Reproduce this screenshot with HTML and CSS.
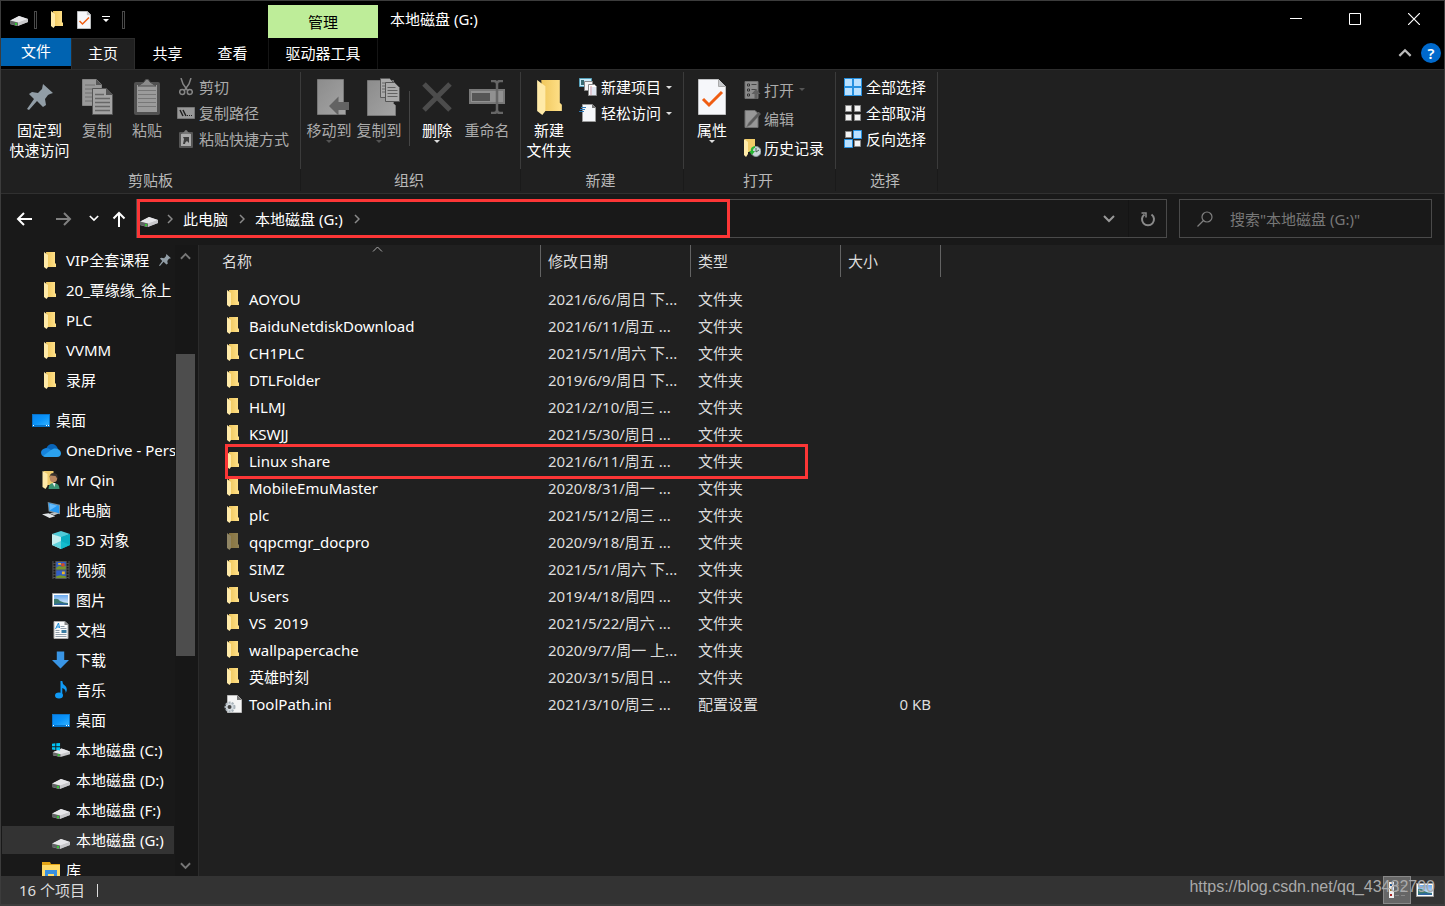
FILE: index.html
```html
<!DOCTYPE html>
<html lang="zh-CN">
<head>
<meta charset="utf-8">
<title>本地磁盘 (G:)</title>
<link rel="stylesheet" href="styles.css">
</head>
<body>
<svg class="defs" aria-hidden="true">
  <defs>
    <linearGradient id="g-folder" x1="0" x2="1"><stop offset="0" stop-color="#f0c75c"/><stop offset="1" stop-color="#ffe18a"/></linearGradient>
    <linearGradient id="g-grey" x1="0" y1="0" x2="1" y2="1"><stop offset="0" stop-color="#8c8c8c"/><stop offset="1" stop-color="#a4a4a4"/></linearGradient>
    <linearGradient id="g-desk" x1="0" y1="0" x2="1" y2="1"><stop offset="0" stop-color="#0a84ee"/><stop offset="0.5" stop-color="#0a94fa"/><stop offset="1" stop-color="#33b1ff"/></linearGradient>
    <linearGradient id="g-sky" x1="0" y1="0" x2="0" y2="1"><stop offset="0" stop-color="#6aa9ee"/><stop offset="1" stop-color="#e8f5ff"/></linearGradient>
  </defs>
  <symbol id="folder" viewBox="0 0 12 17"><path d="M2 0h9v11l1 1v3H3z" fill="url(#g-folder)"/><path d="M0 0l4 3v12l-1.500 2L0 15z" fill="#ffeaa8"/></symbol>
  <symbol id="drive" viewBox="0 0 18 12"><path d="M0 7L9 2l9 3v3L7 12l-7-2z" fill="#b9b9bc"/><path d="M0 6.500L9 2l9 3-10 4z" fill="#e6e6e9"/><path d="M0 6.500l8 2V12l-8-2z" fill="#5f6263"/><path d="M8 8.500L18 5v3L8 12z" fill="#c7c7ca"/><circle cx="6" cy="10" r="1.200" fill="#36c636"/></symbol>
  <symbol id="check-doc" viewBox="0 0 28 36"><path d="M.5.5h20l7 7v28H.5z" fill="#f6f7fa" stroke="#bfc0c2"/><path d="M20.500.500v7h7" fill="#c7c9cc" stroke="#aaa"/><path d="M5 20l6 6L24 13" fill="none" stroke="#ef5d12" stroke-width="3"/></symbol>
  <symbol id="pin" viewBox="0 0 26 26"><path d="M16 0l10 9-3 1-2 1-3 4 1 6-3 2-6-6-8 9-2-1 7-10-5-5 3-2 6 1 4-4z" fill="#919da6"/></symbol>
  <symbol id="pages" viewBox="0 0 31 36"><path d="M.5.5h14l5 5v21H.5z" fill="#999" stroke="#858585"/><path d="M14 0v6h6z" fill="#555"/><path d="M3 6h10M3 10h10M3 14h10M3 18h10M3 22h10" stroke="#707070"/><path d="M10.500 9.500h14l6 6v20h-20z" fill="#a3a3a3" stroke="#555"/><path d="M24 9v7h7z" fill="#555"/><path d="M13 15.500h9M13 19.500h15M13 23.500h15M13 27.500h15M13 31.500h15" stroke="#676767" stroke-width="1.500"/></symbol>
  <symbol id="paste" viewBox="0 0 26 36"><rect y="3" width="26" height="33" rx="2" fill="#515151"/><path d="M3 6h20v27H3z" fill="#9b9b9b"/><path d="M4 7L10 3q3-6 6 0l6 4z" fill="#8b8b8b" stroke="#4e4e4e"/><path d="M4 11.500h18M4 15.500h18M4 19.500h18M4 23.500h18M4 27.500h18" stroke="#777"/></symbol>
  <symbol id="scissors" viewBox="0 0 14 18"><g fill="none" stroke="#858585" stroke-width="1.500"><path d="M2 0l2 6 5 7M12 0l-2 6-5 7"/><circle cx="3.200" cy="14" r="2.500"/><circle cx="10.800" cy="14" r="2.500"/></g></symbol>
  <symbol id="path" viewBox="0 0 18 12"><path d="M.5.5h17v11H.5z" fill="#989898" stroke="#777"/><path d="M3 3l3 6M6 3l3 6" stroke="#222" stroke-width="1.500"/><path d="M10 8.500h1m1 0h1m1 0h1" stroke="#222"/></symbol>
  <symbol id="shortcut" viewBox="0 0 14 18"><rect y="2" width="14" height="16" rx="1" fill="#555"/><path d="M2 4h10v12H2z" fill="#aaa"/><path d="M2 4l3-2q2-4 4 0l3 2z" fill="#777"/><path d="M4 14l1-5-1-2h6v6L8 11q-2 1-2 3z" fill="#3d3d3d"/></symbol>
  <symbol id="move-to" viewBox="0 0 32 36"><path d="M.5.5h26v24l2 2v9H.5z" fill="url(#g-grey)" stroke="#777"/><path d="M12 27L21.500 17.500V23H32v8H21.500v5.500z" fill="#636363"/></symbol>
  <symbol id="copy-to" viewBox="0 0 33 38"><path d="M.5 2.500h26v23l2 2v10H.5z" fill="url(#g-grey)" stroke="#777"/><path d="M13.500.500h9l4 4v15h-13z" fill="#aaa" stroke="#5c5c5c"/><path d="M15 5h7M15 8h7M15 11h7M15 14h7" stroke="#666"/><path d="M18.500 4.500h9l5 5v14h-14z" fill="#aaa" stroke="#555"/><path d="M20.500 9.500h8M20.500 12.500h10M20.500 15.500h10M20.500 18.500h10" stroke="#626262"/></symbol>
  <symbol id="delete" viewBox="0 0 30 30"><path d="M2 2l26 26M28 2L2 28" stroke="#4c4c4c" stroke-width="5"/></symbol>
  <symbol id="rename" viewBox="0 0 36 34"><path d="M1 10h34v13H1z" fill="#919191" stroke="#787878" stroke-width="2"/><path d="M3 13h18v8H3z" fill="#565656"/><path d="M22 1h3q3 0 3 3v26q0 3-3 3h-3M34 1h-3q-3 0-3 3v26q0 3 3 3h3" fill="none" stroke="#666" stroke-width="2.500"/></symbol>
  <symbol id="new-items" viewBox="0 0 18 18"><path d="M.5.5h12v8H.5z" fill="#c8ecfa" stroke="#57a2bc"/><path d="M2 2h3v5H2z" fill="#386d74"/><path d="M5.500 3.500h8v9h-8z" fill="#f4f4f4" stroke="#888"/><path d="M9.500 6.500h6l2 2v9h-8z" fill="#fff" stroke="#888"/><path d="M12 8v9" stroke="#f49a9a"/><path d="M11 10h6M11 12h6M11 14h6M11 16h6" stroke="#a9b9d8" stroke-width=".7"/></symbol>
  <symbol id="easy" viewBox="0 0 18 18"><path d="M3.500.500h10l3 3v14h-13z" fill="#f5f7fa" stroke="#999"/><path d="M13 0v4h4z" fill="#777"/><path d="M2 3.500h5M1 5.500h5M0 7.500h5" stroke="#2c77b5"/></symbol>
  <symbol id="open" viewBox="0 0 16 18"><path d="M.5.5h13v17H.5z" fill="#8d8d8d" stroke="#707070"/><path d="M3 3h2v2H3zM3 8h2v2H3zM3 13h2v2H3z" fill="#aaa" stroke="#333"/><path d="M7 3.500h5M7 8.500h5" stroke="#444"/><path d="M7 13l4.500-5 4.500 5h-3v5H10v-5z" fill="#606060"/></symbol>
  <symbol id="edit" viewBox="0 0 16 18"><path d="M.5.5h10l3 3v14H.5z" fill="#989898" stroke="#707070"/><path d="M14 2l2 2-10 11-4 2 2-4z" fill="#5b5b5b" stroke="#777" stroke-width=".5"/></symbol>
  <symbol id="history" viewBox="0 0 17 18"><path d="M1 0h10v13H1z" fill="#f1cc68"/><path d="M0 0l4 3v12l-2 3-2-2z" fill="#ffeba9"/><circle cx="12" cy="12.500" r="5" fill="#c9d5d9" stroke="#8b9799"/><path d="M12 9v4l3-2" fill="none" stroke="#465"/><path d="M11 7Q6 8 7 12H5l3 4 3-4H9q0-3 2-3z" fill="#26b632"/></symbol>
  <symbol id="sel-all" viewBox="0 0 18 18"><path d="M0 0h18v18H0z" fill="#2690df"/><path d="M1 1h7v7H1zM10 1h7v7h-7zM1 10h7v7H1zM10 10h7v7h-7z" fill="#b9e0ff"/></symbol>
  <symbol id="sel-none" viewBox="0 0 18 18"><path d="M1.500 1.500h6v6h-6zM10.500 1.500h6v6h-6zM1.500 10.500h6v6h-6zM10.500 10.500h6v6h-6z" fill="#f4f4f4" stroke="#8a8a8a"/></symbol>
  <symbol id="sel-inv" viewBox="0 0 18 18"><path d="M1.500 1.500h6v6h-6zM10.500 10.500h6v6h-6z" fill="#f4f4f4" stroke="#8a8a8a"/><path d="M9.500.500h8v8h-8zM.5 9.500h8v8h-8z" fill="#b9e0ff" stroke="#2690df"/></symbol>
  <symbol id="desktop" viewBox="0 0 18 13"><path d="M0 0h18v13H0z" fill="#0873c8"/><path d="M1 1h16v10H1z" fill="url(#g-desk)"/><path d="M1 11.500h1M14 11.500h1M16 11.500h1" stroke="#fff"/></symbol>
  <symbol id="cloud" viewBox="0 0 20 13"><path d="M5 5Q7 0 11 0q4 0 6 5l-7 4z" fill="#0864b8"/><path d="M4 13Q0 12 0 8.500T5 4q3 0 5 2l8 6z" fill="#1683dc"/><path d="M10 6l3-1.500Q19 4 20 9q0 4-4 4H4l-2-1z" fill="#2ba1ee"/></symbol>
  <symbol id="user" viewBox="0 0 17 18"><path d="M1 0h10v14H1z" fill="#efcb6c"/><path d="M0 0l5 3v12l-2 3-3-2z" fill="#ffeaa9"/><path d="M6 18q0-6 5-6 6 0 6 6z" fill="#3d9475"/><circle cx="11" cy="7.500" r="3.700" fill="#b98761"/><path d="M7 7q0-5 4-5 5 0 4 6l-2-3-5-.5z" fill="#39322f"/><path d="M10 12h3l-1 4z" fill="#eee"/></symbol>
  <symbol id="pc" viewBox="0 0 19 17"><path d="M6 0l13 3v10L7 10z" fill="#7a8e9b"/><path d="M7 1l11 3v8L8 9z" fill="#2499f4"/><path d="M8 2l8 2-8 5z" fill="#65bdff"/><path d="M8 12l5-1 5 1-5 2z" fill="#b8c0c5"/><path d="M0 13l7-1 7 3-6 2z" fill="#e0e4e6"/></symbol>
  <symbol id="cube" viewBox="0 0 18 18"><path d="M0 3l9-3 9 3-9 4z" fill="#4fcbd8"/><path d="M0 3l9 3v12l-9-4z" fill="#c4eeef"/><path d="M18 3L9 6v12l9-4z" fill="#0aaec1"/><path d="M0 14l9-4v8z" fill="#5fd3dc"/><path d="M18 14l-9-4v8z" fill="#14bccd"/></symbol>
  <symbol id="film" viewBox="0 0 18 19"><path d="M0 0h18v19H0z" fill="#555"/><path d="M2 0v19M16 0v19" stroke="#191919" stroke-width="2" stroke-dasharray="2 1"/><path d="M4 1h10v8H4zM4 10h10v8H4z" fill="#315fc7"/><path d="M4 7l3-2 3 1 4-1v4H4zM4 16l4-1 6 1v2H4z" fill="#77962b"/><path d="M6 2h3v2H6zM10 11h3v3h-3z" fill="#efb829"/><circle cx="11" cy="4" r="2" fill="#cf4c27"/></symbol>
  <symbol id="picture" viewBox="0 0 18 14"><path d="M.5.5h17v13H.5z" fill="#fff" stroke="#9e9e9e"/><path d="M2 2h14v10H2z" fill="url(#g-sky)"/><path d="M2 6q4-1 6 2 4 2 8 2v2H2z" fill="#3d7b70"/><path d="M2 11l7-1 7 1v1H2z" fill="#2f67a3"/></symbol>
  <symbol id="document" viewBox="0 0 15 18"><path d="M.5.5h11l3 3v14H.5z" fill="#fafafa" stroke="#aaa"/><path d="M11 0v4h4z" fill="#888"/><path d="M2 8l3-6 1 5M3 6h3" stroke="#168bdb" fill="none"/><path d="M7 5.500h4M7 7.500h6M2 9.500h4M2 11.500h4M2 13.500h11M2 15.500h11" stroke="#919eaa"/><path d="M8 9h5v3H8z" fill="#397ca3"/></symbol>
  <symbol id="download" viewBox="0 0 16 16"><path d="M4.500 0h7v8H16l-8 8-8-8h4.500z" fill="#3995e5"/></symbol>
  <symbol id="music" viewBox="0 0 12 18"><ellipse cx="4" cy="14.500" rx="4" ry="3" fill="#109af5"/><path d="M5.500 0h1.800q0 3 2.500 4.500 3.500 3 1 7.500 0-4-3.500-5v8H5.500z" fill="#109af5"/></symbol>
  <symbol id="winlogo" viewBox="0 0 19 15"><path d="M1 10l9-4 9 3v3l-10 3-8-2z" fill="#c7c7ca"/><path d="M1 10l9-4 9 3-10 3z" fill="#e6e6e9"/><path d="M1 10l8 2v3l-8-2z" fill="#656868"/><path d="M0 1l3.500-.5v3H0zM4.500.500L8.500 0v3.500h-4zM0 4.500h3.500v3L0 7zM4.500 4.500h4V8l-4-.5z" fill="#00c2f3"/><circle cx="7" cy="13" r="1.200" fill="#36c636"/></symbol>
  <symbol id="library" viewBox="0 0 18 16"><path d="M0 0h8l1 2h9v14H0z" fill="#e5a515"/><path d="M0 3h18v13H0z" fill="#ffdb69"/><path d="M3 16V8h12v8h-3v-4H6v4z" fill="#3990df"/></symbol>
  <symbol id="ini" viewBox="0 0 18 18"><path d="M3.500.500h10l4 4v13h-14z" fill="#f5f5f5" stroke="#bbb"/><path d="M13 0v5h5z" fill="#777"/><circle cx="6" cy="12" r="4.500" fill="#d5dbe0" stroke="#aab4bb" stroke-width="2" stroke-dasharray="2 1.200"/><circle cx="5.500" cy="12" r="2" fill="#414141"/></symbol>
  <symbol id="chev-r" viewBox="0 0 6 10"><path d="M1 1l4 4-4 4" fill="none" stroke="currentColor" stroke-width="1.500"/></symbol>
  <symbol id="chev-d" viewBox="0 0 12 8"><path d="M1 1l5 5 5-5" fill="none" stroke="currentColor" stroke-width="2"/></symbol>
  <symbol id="chev-u" viewBox="0 0 12 8"><path d="M1 7l5-5 5 5" fill="none" stroke="currentColor" stroke-width="2"/></symbol>
  <symbol id="chev-thin" viewBox="0 0 11 6"><path d="M1 5.500l4.500-4.500L10 5.500" fill="none" stroke="currentColor"/></symbol>
  <symbol id="arrow" viewBox="0 0 16 14"><path d="M15.500 7H1.500M7.500 1l-6 6 6 6" fill="none" stroke="currentColor" stroke-width="2"/></symbol>
  <symbol id="caret" viewBox="0 0 6 3"><path d="M0 0h6L3 3z" fill="currentColor"/></symbol>
</svg>

<div class="window">
  <header class="topbar">
    <div class="titlebar">
      <div class="quick">
        <svg class="i-drive"><use href="#drive"/></svg><span class="grip"></span>
        <button class="plain" aria-label="新建文件夹"><svg class="i-folder"><use href="#folder"/></svg></button>
        <button class="plain" aria-label="属性"><svg class="i-check"><use href="#check-doc"/></svg></button>
        <button class="plain" aria-label="自定义快速访问工具栏"><svg class="i-custom" viewBox="0 0 8 7"><path d="M0 0h8v1H0zM1 3h6L4 6z" fill="#fff"/></svg></button>
        <span class="grip"></span>
      </div>
      <div class="context">管理</div>
      <h1 class="title">本地磁盘 (G:)</h1>
      <div class="controls">
        <button class="plain" aria-label="最小化"><svg class="i-win" viewBox="0 0 12 12"><path d="M0 5.500h12" stroke="#fff"/></svg></button>
        <button class="plain" aria-label="最大化"><svg class="i-win" viewBox="0 0 12 12"><path d="M.5.5h11v11H.5z" fill="none" stroke="#fff"/></svg></button>
        <button class="plain" aria-label="关闭"><svg class="i-win" viewBox="0 0 12 12"><path d="M0 0l12 12M12 0L0 12" stroke="#fff" stroke-width="1.200"/></svg></button>
      </div>
    </div>
    <nav class="tabs">
      <button class="tab file">文件</button><button class="tab active">主页</button><button class="tab">共享</button><button class="tab">查看</button><button class="tab tools">驱动器工具</button>
      <div class="help">
        <button class="plain" aria-label="折叠功能区"><svg class="i-collapse"><use href="#chev-u"/></svg></button>
        <button class="plain help-btn" aria-label="帮助">?</button>
      </div>
    </nav>
  </header>

  <section class="ribbon">
    <div class="group clip">
      <div class="tools-row">
        <button class="big wide"><span class="pic"><svg class="i-pin"><use href="#pin"/></svg></span>固定到<br>快速访问</button>
        <button class="big off"><span class="pic"><svg class="i-pages"><use href="#pages"/></svg></span>复制</button>
        <button class="big off"><span class="pic"><svg class="i-paste"><use href="#paste"/></svg></span>粘贴</button>
        <div class="smalls">
          <button class="small off"><span class="ico"><svg class="i-s14"><use href="#scissors"/></svg></span>剪切</button>
          <button class="small off"><span class="ico"><svg class="i-path"><use href="#path"/></svg></span>复制路径</button>
          <button class="small off"><span class="ico"><svg class="i-s14"><use href="#shortcut"/></svg></span>粘贴快捷方式</button>
        </div>
      </div>
      <div class="group-name">剪贴板</div>
    </div>
    <div class="group org">
      <div class="tools-row">
        <button class="big off"><span class="pic shifted"><svg class="i-move"><use href="#move-to"/></svg></span>移动到<svg class="i-caret dim"><use href="#caret"/></svg></button>
        <button class="big off"><span class="pic shifted"><svg class="i-copyto"><use href="#copy-to"/></svg></span>复制到<svg class="i-caret dim"><use href="#caret"/></svg></button>
        <span class="split"></span>
        <button class="big"><span class="pic"><svg class="i-delete"><use href="#delete"/></svg></span>删除<svg class="i-caret"><use href="#caret"/></svg></button>
        <button class="big off"><span class="pic"><svg class="i-rename"><use href="#rename"/></svg></span>重命名</button>
      </div>
      <div class="group-name">组织</div>
    </div>
    <div class="group new">
      <div class="tools-row">
        <button class="big"><span class="pic"><svg class="i-bigfolder"><use href="#folder"/></svg></span>新建<br>文件夹</button>
        <div class="smalls">
          <button class="small"><span class="ico"><svg class="i-18"><use href="#new-items"/></svg></span>新建项目<svg class="i-caret"><use href="#caret"/></svg></button>
          <button class="small"><span class="ico"><svg class="i-18"><use href="#easy"/></svg></span>轻松访问<svg class="i-caret"><use href="#caret"/></svg></button>
        </div>
      </div>
      <div class="group-name">新建</div>
    </div>
    <div class="group opn">
      <div class="tools-row">
        <button class="big"><span class="pic"><svg class="i-props"><use href="#check-doc"/></svg></span>属性<svg class="i-caret"><use href="#caret"/></svg></button>
        <div class="smalls loose">
          <button class="small off"><span class="ico"><svg class="i-16"><use href="#open"/></svg></span>打开<svg class="i-caret dim"><use href="#caret"/></svg></button>
          <button class="small off"><span class="ico"><svg class="i-16"><use href="#edit"/></svg></span>编辑</button>
          <button class="small"><span class="ico"><svg class="i-16"><use href="#history"/></svg></span>历史记录</button>
        </div>
      </div>
      <div class="group-name">打开</div>
    </div>
    <div class="group sel">
      <div class="tools-row">
        <div class="smalls">
          <button class="small"><span class="ico"><svg class="i-18"><use href="#sel-all"/></svg></span>全部选择</button>
          <button class="small"><span class="ico"><svg class="i-18"><use href="#sel-none"/></svg></span>全部取消</button>
          <button class="small"><span class="ico"><svg class="i-18"><use href="#sel-inv"/></svg></span>反向选择</button>
        </div>
      </div>
      <div class="group-name">选择</div>
    </div>
  </section>

  <div class="navbar">
    <div class="history">
      <button class="plain" aria-label="后退"><svg class="i-arrow"><use href="#arrow"/></svg></button>
      <button class="plain forward" aria-label="前进"><svg class="i-arrow flip"><use href="#arrow"/></svg></button>
      <button class="plain recent" aria-label="最近浏览的位置"><svg class="i-recent"><use href="#chev-d"/></svg></button>
      <button class="plain up" aria-label="上移"><svg class="i-up" viewBox="0 0 14 16"><path d="M7 16V2M1.500 7.500L7 2l5.500 5.500" fill="none" stroke="currentColor" stroke-width="2"/></svg></button>
    </div>
    <div class="address">
      <svg class="i-drive"><use href="#drive"/></svg>
      <svg class="i-crumb"><use href="#chev-r"/></svg>
      <a href="#">此电脑</a>
      <svg class="i-crumb"><use href="#chev-r"/></svg>
      <a href="#">本地磁盘 (G:)</a>
      <svg class="i-crumb"><use href="#chev-r"/></svg>
      <button class="plain drop" aria-label="以前的位置"><svg class="i-drop"><use href="#chev-d"/></svg></button>
      <button class="plain refresh" aria-label="刷新"><svg class="i-refresh" viewBox="0 0 16 16"><path d="M4.500 3.500A6 6 0 1 0 11.500 3.500" fill="none" stroke="currentColor" stroke-width="2"/><path d="M1.500 2h4.500v4.500" fill="none" stroke="currentColor" stroke-width="1.500"/></svg></button>
      <span class="mark mark-address"></span>
    </div>
    <label class="search"><svg class="i-search" viewBox="0 0 16 16"><circle cx="10" cy="6" r="5" fill="none" stroke="currentColor" stroke-width="1.200"/><path d="M6.500 9.500L.5 15.500" stroke="currentColor" stroke-width="1.200"/></svg><input type="text" aria-label="搜索" placeholder='搜索"本地磁盘 (G:)"'></label>
  </div>

  <div class="body">
    <aside class="side">
      <ul class="tree">
        <li class="l1"><span class="ico"><svg class="i-folder"><use href="#folder"/></svg></span>VIP全套课程<svg class="i-pinned"><use href="#pin"/></svg></li>
        <li class="l1"><span class="ico"><svg class="i-folder"><use href="#folder"/></svg></span>20_覃缘缘_徐上</li>
        <li class="l1"><span class="ico"><svg class="i-folder"><use href="#folder"/></svg></span>PLC</li>
        <li class="l1"><span class="ico"><svg class="i-folder"><use href="#folder"/></svg></span>VVMM</li>
        <li class="l1"><span class="ico"><svg class="i-folder"><use href="#folder"/></svg></span>录屏</li>
        <li class="l0"><span class="ico"><svg class="i-desk"><use href="#desktop"/></svg></span>桌面</li>
        <li class="l1"><span class="ico"><svg class="i-cloud"><use href="#cloud"/></svg></span>OneDrive - Personal</li>
        <li class="l1"><span class="ico"><svg class="i-18"><use href="#user"/></svg></span>Mr Qin</li>
        <li class="l1"><span class="ico"><svg class="i-18"><use href="#pc"/></svg></span>此电脑</li>
        <li class="l2"><span class="ico"><svg class="i-18"><use href="#cube"/></svg></span>3D 对象</li>
        <li class="l2"><span class="ico"><svg class="i-18"><use href="#film"/></svg></span>视频</li>
        <li class="l2"><span class="ico"><svg class="i-18"><use href="#picture"/></svg></span>图片</li>
        <li class="l2"><span class="ico"><svg class="i-18"><use href="#document"/></svg></span>文档</li>
        <li class="l2"><span class="ico"><svg class="i-16"><use href="#download"/></svg></span>下载</li>
        <li class="l2"><span class="ico"><svg class="i-18"><use href="#music"/></svg></span>音乐</li>
        <li class="l2"><span class="ico"><svg class="i-desk"><use href="#desktop"/></svg></span>桌面</li>
        <li class="l2"><span class="ico"><svg class="i-18"><use href="#winlogo"/></svg></span>本地磁盘 (C:)</li>
        <li class="l2"><span class="ico low"><svg class="i-drive"><use href="#drive"/></svg></span>本地磁盘 (D:)</li>
        <li class="l2"><span class="ico low"><svg class="i-drive"><use href="#drive"/></svg></span>本地磁盘 (F:)</li>
        <li class="l2 current"><span class="ico low"><svg class="i-drive"><use href="#drive"/></svg></span>本地磁盘 (G:)</li>
        <li class="l1"><span class="ico"><svg class="i-18"><use href="#library"/></svg></span>库</li>
      </ul>
      <div class="scroll">
        <svg class="i-scroll"><use href="#chev-u"/></svg>
        <div class="track"><div class="thumb"></div></div>
        <svg class="i-scroll"><use href="#chev-d"/></svg>
      </div>
    </aside>
    <main class="files">
      <table>
        <colgroup><col class="c-name"><col class="c-mid"><col class="c-mid"><col class="c-size"><col></colgroup>
        <thead><tr><th>名称<svg class="i-sort"><use href="#chev-thin"/></svg></th><th>修改日期</th><th>类型</th><th>大小</th><td></td></tr></thead>
        <tbody>
          <tr class="gap"><td colspan="5"></td></tr>
          <tr><td><svg class="i-folder"><use href="#folder"/></svg>AOYOU</td><td>2021/6/6/周日 下...</td><td>文件夹</td><td></td><td></td></tr>
          <tr><td><svg class="i-folder"><use href="#folder"/></svg>BaiduNetdiskDownload</td><td>2021/6/11/周五 ...</td><td>文件夹</td><td></td><td></td></tr>
          <tr><td><svg class="i-folder"><use href="#folder"/></svg>CH1PLC</td><td>2021/5/1/周六 下...</td><td>文件夹</td><td></td><td></td></tr>
          <tr><td><svg class="i-folder"><use href="#folder"/></svg>DTLFolder</td><td>2019/6/9/周日 下...</td><td>文件夹</td><td></td><td></td></tr>
          <tr><td><svg class="i-folder"><use href="#folder"/></svg>HLMJ</td><td>2021/2/10/周三 ...</td><td>文件夹</td><td></td><td></td></tr>
          <tr><td><svg class="i-folder"><use href="#folder"/></svg>KSWJJ</td><td>2021/5/30/周日 ...</td><td>文件夹</td><td></td><td></td></tr>
          <tr class="marked"><td><svg class="i-folder"><use href="#folder"/></svg>Linux share<span class="mark mark-row"></span></td><td>2021/6/11/周五 ...</td><td>文件夹</td><td></td><td></td></tr>
          <tr><td><svg class="i-folder"><use href="#folder"/></svg>MobileEmuMaster</td><td>2020/8/31/周一 ...</td><td>文件夹</td><td></td><td></td></tr>
          <tr><td><svg class="i-folder"><use href="#folder"/></svg>plc</td><td>2021/5/12/周三 ...</td><td>文件夹</td><td></td><td></td></tr>
          <tr><td><svg class="i-folder hid"><use href="#folder"/></svg>qqpcmgr_docpro</td><td>2020/9/18/周五 ...</td><td>文件夹</td><td></td><td></td></tr>
          <tr><td><svg class="i-folder"><use href="#folder"/></svg>SIMZ</td><td>2021/5/1/周六 下...</td><td>文件夹</td><td></td><td></td></tr>
          <tr><td><svg class="i-folder"><use href="#folder"/></svg>Users</td><td>2019/4/18/周四 ...</td><td>文件夹</td><td></td><td></td></tr>
          <tr><td><svg class="i-folder"><use href="#folder"/></svg>VS&nbsp; 2019</td><td>2021/5/22/周六 ...</td><td>文件夹</td><td></td><td></td></tr>
          <tr><td><svg class="i-folder"><use href="#folder"/></svg>wallpapercache</td><td>2020/9/7/周一 上...</td><td>文件夹</td><td></td><td></td></tr>
          <tr><td><svg class="i-folder"><use href="#folder"/></svg>英雄时刻</td><td>2020/3/15/周日 ...</td><td>文件夹</td><td></td><td></td></tr>
          <tr><td><svg class="i-ini"><use href="#ini"/></svg>ToolPath.ini</td><td>2021/3/10/周三 ...</td><td>配置设置</td><td>0 KB</td><td></td></tr>
        </tbody>
      </table>
    </main>
  </div>

  <footer class="status">
    <span class="count">16 个项目</span>
    <div class="views">
      <button class="plain view on" aria-label="详细信息"><svg class="i-view" viewBox="0 0 20 18"><path d="M2 1h5v16H2z" fill="#eee"/><path d="M3 3h2v2H3z" fill="#27568f"/><path d="M3 8h2v2H3z" fill="#9b7b2b"/><path d="M3 13h2v2H3z" fill="#a22"/><path d="M8 4.500h4m2 0h4M8 9.500h4m2 0h4M8 14.500h4m2 0h4" stroke="#888"/></svg></button>
      <button class="plain view" aria-label="大缩略图"><svg class="i-18"><use href="#picture"/></svg></button>
      <span class="watermark">https://blog.csdn.net/qq_43482790</span>
    </div>
  </footer>
</div>
</body>
</html>
```
FILE: styles.css
```css
* { box-sizing: border-box; }
body { margin: 0; background: #3c3c3c; color: #fff; font: 15px/20px "Noto Sans", "Noto Sans CJK SC", sans-serif; }
button, input { font: inherit; color: inherit; }
button { border: 0; background: none; padding: 0; white-space: nowrap; }
a { color: inherit; text-decoration: none; }
svg { display: block; flex: none; }
.defs { position: absolute; width: 0; height: 0; }
.plain { display: flex; align-items: center; justify-content: center; }
.window { display: flex; flex-direction: column; height: 100vh; border: 1px solid #3c3c3c; border-bottom-width: 2px; background: #191919; }

.i-drive { width: 18px; height: 12px; }
.i-folder { width: 12px; height: 17px; }
.i-check { width: 14px; height: 18px; }
.i-custom { width: 8px; height: 7px; }
.i-win { width: 12px; height: 12px; }
.i-collapse { width: 14px; height: 9px; color: #bbb; }
.i-pin { width: 26px; height: 26px; }
.i-pages { width: 31px; height: 36px; }
.i-paste { width: 26px; height: 36px; }
.i-s14 { width: 14px; height: 18px; }
.i-path { width: 18px; height: 12px; }
.i-move { width: 32px; height: 36px; }
.i-copyto { width: 33px; height: 38px; }
.i-delete { width: 30px; height: 30px; }
.i-rename { width: 36px; height: 34px; }
.i-bigfolder { width: 25px; height: 35px; }
.i-props { width: 28px; height: 36px; }
.i-18 { width: 18px; height: 18px; }
.i-16 { width: 17px; height: 18px; }
.i-desk { width: 18px; height: 13px; }
.i-cloud { width: 20px; height: 13px; }
.i-caret { width: 6px; height: 3px; color: #ddd; }
.i-caret.dim { color: #555; }

.topbar { flex: none; background: #000; }
.titlebar { display: flex; height: 37px; }
.quick { display: flex; align-items: center; width: 267px; padding-left: 9px; }
.grip { width: 3px; height: 18px; border: 1px solid #4a4a4a; margin-left: 6px; }
.quick .plain { margin-left: 14px; }
.quick .i-custom { margin-right: 6px; margin-left: -3px; }
.context { display: flex; align-items: center; justify-content: center; width: 110px; height: 33px; margin-top: 4px; background: #beed99; color: #000; }
.title { margin: 0; padding: 8px 0 0 12px; font-size: 15px; line-height: 20px; font-weight: 400; }
.controls { display: flex; margin-left: auto; padding-right: 1px; }
.controls .plain { width: 59px; height: 35px; }
.tabs { display: flex; height: 31px; }
.tab { width: 65px; padding-bottom: 2px; }
.tab.file { width: 70px; height: 28px; background: #0063b1; }
.tab.active { width: 64px; background: #202020; border: 1px solid #2d2d2d; border-bottom: 0; }
.tab.tools { width: 110px; margin-left: 3px; border: solid #151515; border-width: 0 1px; }
.help { display: flex; align-items: center; gap: 9px; margin-left: auto; padding: 0 3px 2px 0; }
.help-btn { width: 20px; height: 20px; border-radius: 50%; background: #0069cc; font-size: 15px; font-weight: 600; }

.ribbon { display: flex; flex: none; height: 125px; padding-top: 2px; background: #202020; border-top: 1px solid #2d2d2d; border-bottom: 1px solid #303030; }
.group { display: flex; flex-direction: column; flex: none; }
.tools-row { display: flex; height: 97px; border-right: 1px solid #3b3b3b; }
.group-name { display: flex; align-items: center; justify-content: center; height: 22px; padding-right: 3px; border-right: 1px solid #1a1a1a; color: #b8b8b8; }
.clip .group-name { padding-right: 0; }
.clip { width: 300px; }
.org { width: 220px; }
.new { width: 163px; }
.opn { width: 152px; }
.sel { width: 102px; }
.big { display: flex; flex-direction: column; align-items: center; width: 50px; padding-top: 6px; }
.big.wide { width: 71px; padding-left: 6px; }
.pic { display: flex; align-items: center; justify-content: center; height: 38px; margin-bottom: 4px; }
.pic.shifted { padding-left: 8px; }
.off { color: #ababab; }
.smalls { display: flex; flex-direction: column; padding-top: 2px; }
.small { display: flex; align-items: center; height: 26px; }
.loose { padding-top: 3px; }
.loose .small { height: 29px; }
.small .ico { display: flex; justify-content: center; width: 18px; margin-right: 4px; }
.loose .ico { margin-right: 3px; }
.small .i-caret { margin-left: 5px; }
.clip .smalls { padding-left: 5px; }
.org .tools-row { padding-left: 3px; }
.org .split { width: 1px; height: 55px; margin: 19px 2px 0 5px; background: #454545; }
.new .tools-row { padding-left: 3px; }
.new .smalls { padding-left: 5px; }
.opn .tools-row { padding-left: 3px; }
.opn .smalls { padding-left: 6px; }
.sel .tools-row { padding-left: 8px; }

.navbar { display: flex; align-items: center; flex: none; gap: 12px; height: 51px; padding: 0 12px 2px 0; }
.history { display: flex; align-items: center; width: 123px; padding-left: 15px; }
.i-arrow { width: 17px; height: 14px; }
.flip { transform: scaleX(-1); }
.forward { margin-left: 22px; color: #808080; }
.recent { margin-left: 17px; }
.i-recent { width: 10px; height: 7px; }
.up { margin-left: 13px; }
.i-up { width: 14px; height: 16px; }
.address { position: relative; display: flex; flex: 1; align-items: center; height: 39px; padding-left: 3px; border: 1px solid #4a4a4a; }
.address .i-drive { margin-top: 5px; }
.address a { margin: 0 11px 0 10px; }
.address .i-drive + .i-crumb { margin-left: 9px; }
.i-crumb { width: 6px; height: 10px; color: #8a8a8a; }
.drop { width: 38px; height: 37px; margin-left: auto; color: #999; }
.i-drop { width: 12px; height: 8px; }
.refresh { width: 38px; height: 37px; border-left: 1px solid #141414; color: #8a8a8a; }
.i-refresh { width: 16px; height: 16px; }
.mark { position: absolute; border: 3px solid #fc3636; pointer-events: none; }
.mark-address { left: 0; top: -1px; bottom: -1px; width: 593px; }
.search { display: flex; align-items: center; gap: 17px; width: 253px; height: 39px; padding-left: 17px; border: 1px solid #4a4a4a; color: #808080; }
.i-search { width: 16px; height: 16px; }
.search input { width: 180px; padding: 0; border: 0; outline: 0; background: none; }
.search input::placeholder { color: #777; opacity: 1; }

.body { display: flex; flex: 1; min-height: 0; }
.side { display: flex; flex: none; width: 198px; border-right: 1px solid #2b2b2b; }
.tree { width: 174px; margin: 0; padding: 0; overflow: hidden; list-style: none; }
.tree li { display: flex; align-items: center; gap: 5px; height: 30px; padding-left: 39px; white-space: nowrap; }
.tree .ico { display: flex; flex: none; align-items: center; justify-content: center; width: 21px; }
.tree .low { padding-top: 5px; }
.tree .l0 { margin-top: 10px; padding-left: 29px; }
.tree .l2 { padding-left: 49px; }
.tree .current { margin-left: 1px; margin-right: 1px; padding-left: 48px; background: #333; background-clip: padding-box; border: solid #191919; border-width: 1px 0; }
.tree .l1 .i-folder { margin-right: 2px; }
.i-pinned { width: 12px; height: 12px; margin-left: 5px; }
.scroll { display: flex; flex-direction: column; align-items: center; width: 23px; padding: 7px 2px 6px 0; background: #171717; color: #777; }
.i-scroll { width: 11px; height: 8px; }
.track { flex: 1; width: 19px; padding-top: 94px; }
.thumb { height: 302px; background: #4d4d4d; }

.files { flex: 1; min-width: 0; background: #202020; }
table { width: 100%; table-layout: fixed; border-spacing: 0; }
.c-name { width: 342px; }
.c-mid { width: 150px; }
.c-size { width: 100px; }
th { position: relative; height: 32px; padding: 0 0 0 7px; border-right: 1px solid #636363; color: #ddd; font-weight: 400; text-align: left; }
th:first-child { padding-left: 23px; }
.i-sort { position: absolute; left: 173px; top: 1px; width: 11px; height: 6px; color: #aaa; }
tbody td { height: 27px; padding: 0 0 0 7px; color: #ddd; white-space: nowrap; }
tbody .gap td { height: 8px; }
tbody td:first-child { padding-left: 50px; color: #fff; }
tbody td:nth-child(4) { padding-right: 10px; text-align: right; }
tbody td svg { float: left; margin: 1px 0 0 -22px; }
tbody td .i-ini { width: 18px; height: 18px; margin-left: -25px; }
.hid { opacity: .5; }
.marked { position: relative; }
.mark-row { left: 26px; top: -3px; width: 583px; height: 35px; }

.status { display: flex; align-items: center; flex: none; height: 28px; padding-left: 18px; background: #333; color: #ddd; }
.count { display: flex; align-items: center; gap: 12px; }
.count::after { content: ""; width: 1px; height: 13px; background: #ddd; }
.views { position: relative; display: flex; align-items: center; height: 28px; margin-left: auto; padding-right: 5px; }
.view { width: 28px; height: 28px; }
.view.on { background: #666; border: 1px solid #888; }
.i-view { width: 20px; height: 18px; }
.watermark { position: absolute; right: 9px; top: 1px; color: #aaa; font: 16px/20px "Liberation Sans", sans-serif; white-space: nowrap; pointer-events: none; }
```
